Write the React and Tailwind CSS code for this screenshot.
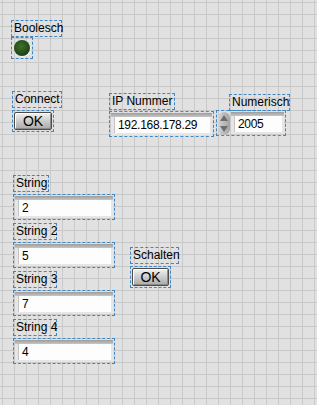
const font = { fontFamily: '"Liberation Sans", Arial, sans-serif' };

function Label({ text, className = '' }) {
  return (
    <div className={`border border-dashed border-[#3f88c5] px-[2px] text-[12px] leading-[15px] text-black whitespace-nowrap ${className}`}>
      {text}
    </div>
  );
}

function Bevel({ value }) {
  return (
    <div className="h-full bg-[linear-gradient(to_bottom,#9c9c9c,#c6c6c6_4px,#e6e6e6_4px)] pb-[2px] pl-[3px] pr-[2px] pt-[4px]">
      <div className="h-full border-l border-[#c4c4c4] bg-[#fdfdfd] px-[3px] text-[12px] leading-[16px] tracking-[-0.3px] text-black">
        {value}
      </div>
    </div>
  );
}

function Field({ value, className = '' }) {
  return (
    <div className={`h-[26px] border border-dashed border-[#3f88c5] p-[1px] ${className}`}>
      <Bevel value={value} />
    </div>
  );
}

function OkButton({ className = '' }) {
  return (
    <div className={`border border-dashed border-[#3f88c5] p-[1px] ${className}`}>
      <div className="flex h-[18px] w-full items-center justify-center rounded-[2px] border border-[#4b4b4b] bg-[linear-gradient(to_bottom,#f2f2f2,#c9c9c9_55%,#a9a9a9)] text-[14px] leading-none text-black shadow-[inset_1px_1px_0_#ffffff,inset_-1px_-1px_0_#8c8c8c]">
        OK
      </div>
    </div>
  );
}

function Spinner() {
  return (
    <div className="flex h-[23px] w-[12px] flex-col items-center justify-between rounded-[6px] bg-[linear-gradient(to_right,#d4d4d4,#a3a3a3)] py-[3px]">
      <svg width="8" height="6" viewBox="0 0 8 6"><path d="M4 0 L8 6 L0 6 Z" fill="#6e6e6e" /></svg>
      <svg width="8" height="6" viewBox="0 0 8 6"><path d="M0 0 L8 0 L4 6 Z" fill="#6e6e6e" /></svg>
    </div>
  );
}

export default function App() {
  return (
    <div
      style={font}
      className="relative h-[405px] w-[317px] overflow-hidden bg-[#e1e1e1] bg-[linear-gradient(to_right,#c9c9c9_1px,transparent_1px),linear-gradient(to_bottom,#c9c9c9_1px,transparent_1px)] bg-[size:12px_12px] bg-[position:2px_2px]"
    >
      {/* Boolesch LED */}
      <div className="absolute left-[11px] top-[20px] flex flex-col items-start">
        <Label text="Boolesch" className="w-[51px]" />
        <div className="flex h-[22px] w-[22px] items-center justify-center border border-dashed border-[#3f88c5]">
          <div className="h-[16px] w-[16px] rounded-full bg-[radial-gradient(circle_at_45%_40%,#3f6e2e,#234e17_55%,#173a0e_80%)] shadow-[1px_1px_1px_#f4f4f4]" />
        </div>
      </div>

      {/* Connect */}
      <div className="absolute left-[12px] top-[91px] flex flex-col items-start gap-[2px]">
        <Label text="Connect" className="w-[50px]" />
        <OkButton className="w-[42px]" />
      </div>

      {/* IP Nummer */}
      <div className="absolute left-[109px] top-[93px] flex flex-col items-start gap-[1px]">
        <Label text="IP Nummer" className="w-[66px]" />
        <Field value="192.168.178.29" className="w-[105px]" />
      </div>

      {/* Numerisch */}
      <div className="absolute left-[229px] top-[94px]">
        <Label text="Numerisch" className="w-[61px]" />
      </div>
      <div className="absolute left-[216px] top-[110px] flex h-[26px] w-[70px] items-center gap-[1px] border border-dashed border-[#3f88c5] p-[1px]">
        <Spinner />
        <div className="h-full flex-1">
          <Bevel value="2005" />
        </div>
      </div>

      {/* Strings */}
      <div className="absolute left-[13px] top-[175px] flex flex-col items-start gap-[2px]">
        <Label text="String" className="w-[36px]" />
        <Field value="2" className="w-[102px]" />
        <Label text="String 2" className="mt-[1px] w-[44px]" />
        <Field value="5" className="w-[102px]" />
        <Label text="String 3" className="mt-[1px] w-[44px]" />
        <Field value="7" className="w-[102px]" />
        <Label text="String 4" className="mt-[1px] w-[44px]" />
        <Field value="4" className="w-[102px]" />
      </div>

      {/* Schalten */}
      <div className="absolute left-[130px] top-[247px] flex flex-col items-start gap-[2px]">
        <Label text="Schalten" className="w-[49px]" />
        <OkButton className="w-[41px]" />
      </div>
    </div>
  );
}
